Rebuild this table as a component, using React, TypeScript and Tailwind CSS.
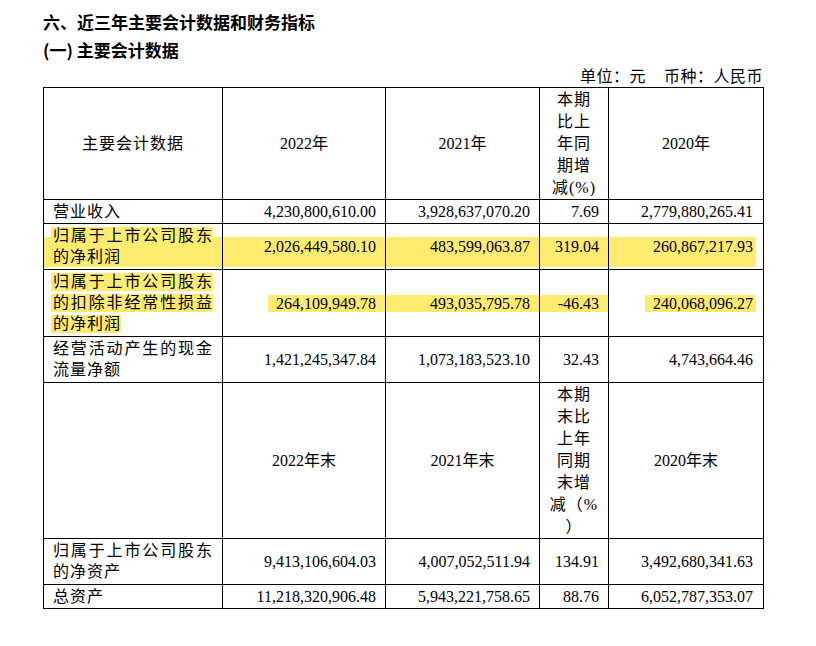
import React from 'react'

const HL = 'bg-[#ffec6e]'
const CELL = 'border-r border-b border-black'
const BAND = 'bg-[linear-gradient(to_bottom,transparent_13px,#ffec6e_13px,#ffec6e_43px,transparent_43px)]'

type Line = { t: string; full?: boolean }

function Label({ lines, hl = false, band = false }: { lines: Line[]; hl?: boolean[] | boolean; band?: boolean }) {
  return (
    <div className={`${CELL} flex flex-col justify-center pl-[7px] ${band ? BAND : ''}`}>
      {lines.map((l, i) => {
        const on = Array.isArray(hl) ? hl[i] : hl
        return (
          <div key={i} className="h-[21px] flex items-center">
            <span
              className={`h-[18px] leading-[18px] pl-[2px] tracking-[1px] ${on ? HL : ''} ${
                l.full ? 'block w-[162px] [text-align-last:justify]' : 'inline-block'
              }`}
            >
              {l.t}
            </span>
          </div>
        )
      })}
    </div>
  )
}

function Num({ v, pr = 'pr-[9px]', band = false }: { v: string; pr?: string; band?: boolean }) {
  return <div className={`${CELL} flex items-center justify-end ${pr} ${band ? BAND : ''}`}>{v}</div>
}

function Head({ children }: { children: React.ReactNode }) {
  return <div className={`${CELL} flex items-center justify-center`}>{children}</div>
}

function Stack({ lines }: { lines: string[] }) {
  return (
    <div className={`${CELL} flex flex-col items-center justify-center tracking-[1px]`}>
      {lines.map((l, i) => (
        <div key={i} className="leading-[22px] h-[22px]">{l}</div>
      ))}
    </div>
  )
}

export default function App() {
  return (
    <div className="min-h-screen bg-white text-black pl-[43px] pt-[11px]">
      <div className="font-['Noto_Sans_CJK_SC',sans-serif] font-bold text-[17px] leading-[22px]">
        六、近三年主要会计数据和财务指标
      </div>
      <div className="mt-[6px] font-['Noto_Sans_CJK_SC',sans-serif] font-bold text-[17px] leading-[22px]">
        (一) 主要会计数据
      </div>

      <div className="w-[721px] font-['Liberation_Serif','Noto_Sans_CJK_SC',serif] text-[16px]">
        <div className="mt-[6px] leading-[20px] h-[20px] text-right tracking-[0.5px] pr-[1px]">
          单位：元<span className="ml-[18px]">币种：人民币</span>
        </div>

        <div className="grid border-l border-t border-black grid-cols-[179px_163px_154px_69px_155px] grid-rows-[112px_24px_46px_67px_46px_156px_46px_24px]">
          {/* header */}
          <Head><span className="tracking-[1px]">主要会计数据</span></Head>
          <Head>2022年</Head>
          <Head>2021年</Head>
          <Stack lines={['本期', '比上', '年同', '期增', '减(%)']} />
          <Head>2020年</Head>

          {/* 营业收入 */}
          <Label lines={[{ t: '营业收入' }]} />
          <Num v="4,230,800,610.00" />
          <Num v="3,928,637,070.20" />
          <Num v="7.69" />
          <Num v="2,779,880,265.41" pr="pr-[10px]" />

          {/* 净利润 */}
          <Label lines={[{ t: '归属于上市公司股东', full: true }, { t: '的净利润' }]} hl={[true, false]} band />
          <Num v="2,026,449,580.10" band />
          <Num v="483,599,063.87" band />
          <Num v="319.04" band />
          <div className={`${CELL} flex`}>
            <div className={`flex-1 mr-[7px] pr-[3px] flex items-center justify-end ${BAND}`}>260,867,217.93</div>
          </div>

          {/* 扣非净利润 */}
          <Label
            lines={[{ t: '归属于上市公司股东', full: true }, { t: '的扣除非经常性损益', full: true }, { t: '的净利润' }]}
            hl
          />
          <div className={`${CELL} flex items-center justify-end`}>
            <span className={`${HL} h-[17px] leading-[17px] pl-[8px] pr-[9px]`}>264,109,949.78</span>
          </div>
          <div className={`${CELL} flex items-center`}>
            <span className={`${HL} w-full text-right h-[17px] leading-[17px] pr-[9px]`}>493,035,795.78</span>
          </div>
          <div className={`${CELL} flex items-center`}>
            <span className={`${HL} w-full text-right h-[17px] leading-[17px] pr-[9px]`}>-46.43</span>
          </div>
          <div className={`${CELL} flex items-center justify-end`}>
            <span className={`${HL} h-[17px] leading-[17px] pl-[8px] pr-[3px] mr-[7px]`}>240,068,096.27</span>
          </div>

          {/* 经营现金流 */}
          <Label lines={[{ t: '经营活动产生的现金', full: true }, { t: '流量净额' }]} />
          <Num v="1,421,245,347.84" />
          <Num v="1,073,183,523.10" />
          <Num v="32.43" />
          <Num v="4,743,664.46" pr="pr-[10px]" />

          {/* header 2 */}
          <div className={CELL} />
          <Head>2022年末</Head>
          <Head>2021年末</Head>
          <Stack lines={['本期', '末比', '上年', '同期', '末增', '减（%', '）']} />
          <Head>2020年末</Head>

          {/* 净资产 */}
          <Label lines={[{ t: '归属于上市公司股东', full: true }, { t: '的净资产' }]} />
          <Num v="9,413,106,604.03" />
          <Num v="4,007,052,511.94" />
          <Num v="134.91" />
          <Num v="3,492,680,341.63" pr="pr-[10px]" />

          {/* 总资产 */}
          <Label lines={[{ t: '总资产' }]} />
          <Num v="11,218,320,906.48" />
          <Num v="5,943,221,758.65" />
          <Num v="88.76" />
          <Num v="6,052,787,353.07" pr="pr-[10px]" />
        </div>
      </div>
    </div>
  )
}
